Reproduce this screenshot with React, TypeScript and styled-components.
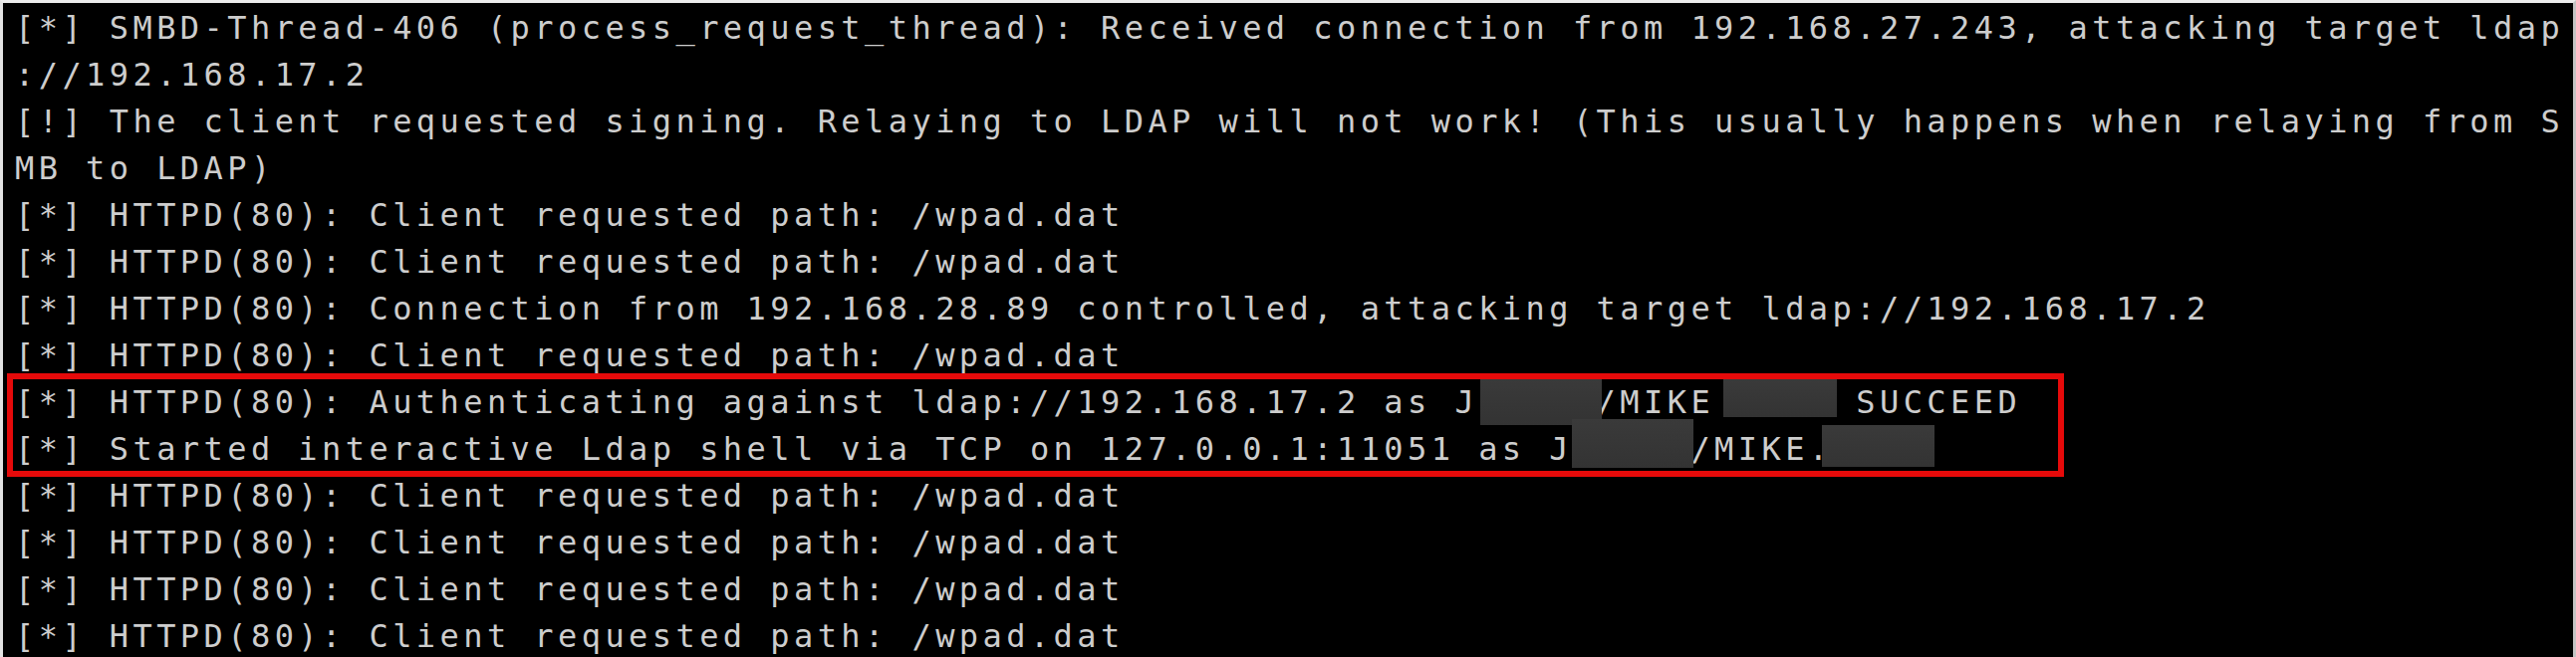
import React from "react";
import styled, { createGlobalStyle } from "styled-components";

const Global = createGlobalStyle`
  html, body { margin: 0; padding: 0; background: #000; }
  body { width: 2586px; height: 660px; overflow: hidden; }
`;

const Screen = styled.div`
  box-sizing: border-box;
  width: 2586px;
  height: 660px;
  background: #000;
  border-top: 3px solid #ececec;
  border-left: 3px solid #e4e4e4;
  border-right: 3px solid #c4c4c4;
  padding: 2px 0 0 12px;
  overflow: hidden;
`;

const Lines = styled.div`
  display: flex;
  flex-direction: column;
  font-family: "DejaVu Sans Mono", "Liberation Mono", monospace;
  font-size: 32px;
  letter-spacing: 4.43px;
  line-height: 47px;
  color: #cdcdcd;
`;

const Line = styled.div`
  position: relative;
  height: 47px;
  white-space: pre;
`;

const Highlight = styled.div`
  position: relative;
  display: flex;
  flex-direction: column;
  &::after {
    content: "";
    position: absolute;
    left: -8px;
    top: -6.5px;
    width: 2065px;
    height: 104px;
    box-sizing: border-box;
    border: 6px solid #e60a0a;
    pointer-events: none;
  }
`;

const Redact = styled.span<{ $x: number; $y: number; $w: number; $h: number }>`
  position: absolute;
  left: ${(p) => p.$x}px;
  top: ${(p) => p.$y}px;
  width: ${(p) => p.$w}px;
  height: ${(p) => p.$h}px;
  background: linear-gradient(180deg, #3a3a3a, #333333);
`;

const client = "[*] HTTPD(80): Client requested path: /wpad.dat";

export default function App() {
  return (
    <>
      <Global />
      <Screen>
        <Lines>
          <Line>[*] SMBD-Thread-406 (process_request_thread): Received connection from 192.168.27.243, attacking target ldap</Line>
          <Line>://192.168.17.2</Line>
          <Line>[!] The client requested signing. Relaying to LDAP will not work! (This usually happens when relaying from S</Line>
          <Line>MB to LDAP)</Line>
          <Line>{client}</Line>
          <Line>{client}</Line>
          <Line>[*] HTTPD(80): Connection from 192.168.28.89 controlled, attacking target ldap://192.168.17.2</Line>
          <Line>{client}</Line>
          <Highlight>
            <Line>
              {"[*] HTTPD(80): Authenticating against ldap://192.168.17.2 as J     /MIKE      SUCCEED"}
              <Redact $x={1471} $y={0} $w={122} $h={46} />
              <Redact $x={1715} $y={0} $w={114} $h={38} />
            </Line>
            <Line>
              {"[*] Started interactive Ldap shell via TCP on 127.0.0.1:11051 as J     /MIKE."}
              <Redact $x={1563} $y={-7} $w={122} $h={49} />
              <Redact $x={1814} $y={-1} $w={113} $h={42} />
            </Line>
          </Highlight>
          <Line>{client}</Line>
          <Line>{client}</Line>
          <Line>{client}</Line>
          <Line>{client}</Line>
        </Lines>
      </Screen>
    </>
  );
}
